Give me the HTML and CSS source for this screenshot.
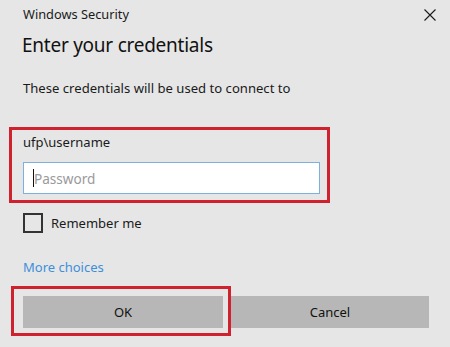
FILE: index.html
```html
<!DOCTYPE html>
<html>
<head>
<meta charset="utf-8">
<link rel="stylesheet" href="styles.css">
</head>
<body>
<div class="dialog">
  <div class="titlebar">
    <span class="title">Windows Security</span>
    <svg class="close" width="12" height="12" viewBox="0 0 12 12"><path d="M0.5 0.5L11.5 11.5M11.5 0.5L0.5 11.5" stroke="#1a1a1a" stroke-width="1.1" fill="none"/></svg>
  </div>
  <div class="heading">Enter your credentials</div>
  <div class="desc">These credentials will be used to connect to</div>
  <div class="group">
    <div class="user">ufp\username</div>
    <div class="input"><span class="caret"></span><span class="placeholder">Password</span></div>
  </div>
  <div class="remember"><span class="checkbox"></span><span class="label">Remember me</span></div>
  <div class="more">More choices</div>
  <div class="buttons">
    <div class="btn ok">OK</div>
    <div class="btn cancel">Cancel</div>
  </div>
</div>
</body>
</html>
```

FILE: styles.css
```css
* { box-sizing: border-box; }
html, body { margin: 0; padding: 0; }
body {
  width: 450px;
  height: 347px;
  background: #e6e6e6;
  font-family: "Noto Sans", "Open Sans", sans-serif;
  color: #1a1a1a;
  overflow: hidden;
}
.dialog { padding: 0; }
.titlebar {
  height: 28px;
  display: flex;
  align-items: center;
  justify-content: space-between;
  padding: 0 14px 0 23px;
}
.title { font-size: 12.8px; color: #1a1a1a; }
.close { display: block; margin-top: 1px; }
.heading {
  height: 34px;
  line-height: 34px;
  font-size: 19px;
  letter-spacing: -0.25px;
  padding-left: 22px;
  color: #111;
}
.desc {
  margin-top: 16px;
  line-height: 20px;
  font-size: 13.1px;
  padding-left: 23px;
}
.group {
  margin-top: 29px;
  margin-left: 9px;
  width: 321px;
  border: 3px solid #d0212f;
  padding: 0 7px 6px 11px;
}
.user {
  line-height: 24px;
  font-size: 13px;
}
.input {
  margin-top: 8px;
  height: 32px;
  background: #fff;
  border: 1px solid #7cb1de;
  display: flex;
  align-items: center;
  padding-left: 9px;
}
.caret {
  width: 1px;
  height: 18px;
  background: #111;
}
.placeholder {
  font-size: 13.6px;
  color: #9a9a9a;
}
.remember {
  margin-top: 10px;
  padding-left: 23px;
  display: flex;
  align-items: center;
  height: 20px;
}
.checkbox {
  width: 20px;
  height: 20px;
  border: 2px solid #333;
}
.label {
  margin-left: 8px;
  font-size: 13px;
}
.more {
  margin-top: 24px;
  line-height: 20px;
  padding-left: 23px;
  font-size: 13px;
  color: #3d8fdb;
}
.buttons {
  margin-top: 19px;
  padding-left: 23px;
  display: flex;
  gap: 8px;
}
.btn {
  width: 198px;
  height: 32px;
  background: #b7b7b7;
  display: flex;
  align-items: center;
  justify-content: center;
  font-size: 13px;
  color: #111;
}
.ok { position: relative; width: 200px; }
.ok::after {
  content: "";
  position: absolute;
  left: -12px;
  top: -10px;
  right: -8px;
  bottom: -8px;
  border: 3px solid #d0212f;
}
```
